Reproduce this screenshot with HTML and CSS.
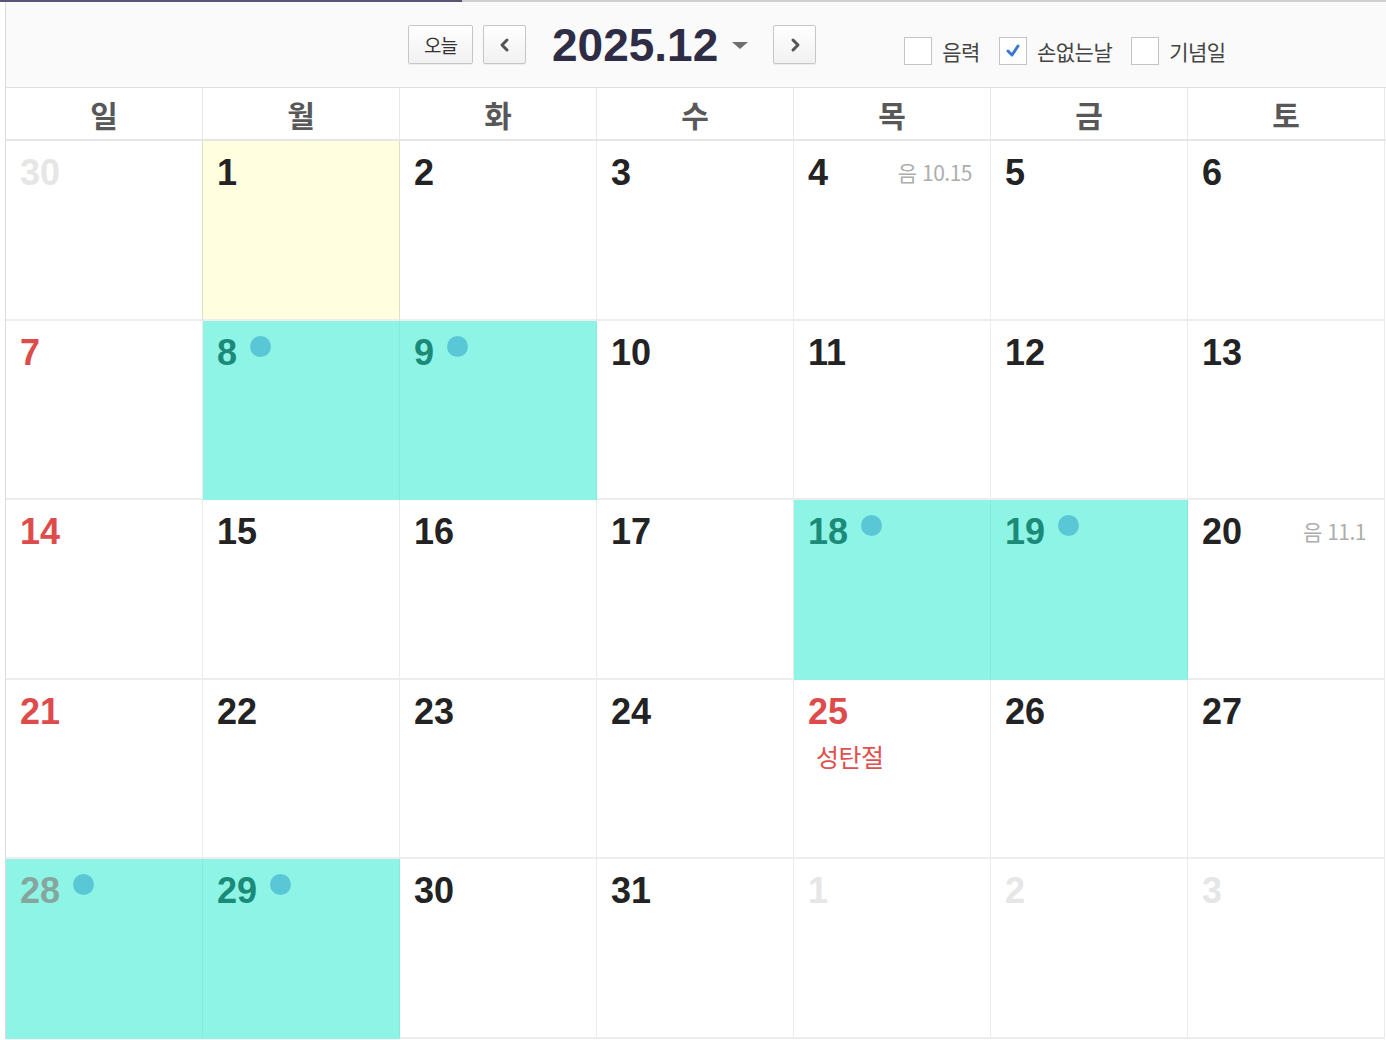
FILE: index.html
```html
<!DOCTYPE html>
<html lang="ko">
<head>
  <meta charset="UTF-8">
  <title>달력 2025.12</title>
  <link rel="stylesheet" href="styles.css">
</head>
<body>
  <div class="topline"><span class="progress"></span></div>

  <div class="calendar">
    <div class="toolbar">
      <div class="nav">
        <button class="btn today">오늘</button>
        <button class="btn arrow">
          <svg width="14" height="16" viewBox="0 0 14 16"><polyline points="9,3 4,8 9,13" fill="none" stroke="#555" stroke-width="3" stroke-linejoin="round" stroke-linecap="round"/></svg>
        </button>
        <div class="title">2025.12<span class="caret"></span></div>
        <button class="btn arrow">
          <svg width="14" height="16" viewBox="0 0 14 16"><polyline points="5,3 10,8 5,13" fill="none" stroke="#555" stroke-width="3" stroke-linejoin="round" stroke-linecap="round"/></svg>
        </button>
      </div>
      <div class="options">
        <label class="opt"><span class="box"></span>음력</label>
        <label class="opt"><span class="box">
          <svg width="20" height="20" viewBox="0 0 20 20"><polyline points="5,10 9,14 15,5" fill="none" stroke="#3b78d0" stroke-width="3" stroke-linecap="round" stroke-linejoin="round"/></svg>
        </span>손없는날</label>
        <label class="opt"><span class="box"></span>기념일</label>
      </div>
    </div>

    <div class="weekdays">
      <div>일</div><div>월</div><div>화</div><div>수</div><div>목</div><div>금</div><div>토</div>
    </div>

    <div class="grid">
      <!-- week 1 -->
      <div class="cell"><div class="top"><span class="num other">30</span></div></div>
      <div class="cell today-cell"><div class="top"><span class="num">1</span></div></div>
      <div class="cell"><div class="top"><span class="num">2</span></div></div>
      <div class="cell"><div class="top"><span class="num">3</span></div></div>
      <div class="cell"><div class="top"><span class="num">4</span><span class="lunar">음 10.15</span></div></div>
      <div class="cell"><div class="top"><span class="num">5</span></div></div>
      <div class="cell"><div class="top"><span class="num">6</span></div></div>
      <!-- week 2 -->
      <div class="cell"><div class="top"><span class="num sun">7</span></div></div>
      <div class="cell event"><div class="top"><span class="num">8</span><span class="dot"></span></div></div>
      <div class="cell event"><div class="top"><span class="num">9</span><span class="dot"></span></div></div>
      <div class="cell"><div class="top"><span class="num">10</span></div></div>
      <div class="cell"><div class="top"><span class="num">11</span></div></div>
      <div class="cell"><div class="top"><span class="num">12</span></div></div>
      <div class="cell"><div class="top"><span class="num">13</span></div></div>
      <!-- week 3 -->
      <div class="cell"><div class="top"><span class="num sun">14</span></div></div>
      <div class="cell"><div class="top"><span class="num">15</span></div></div>
      <div class="cell"><div class="top"><span class="num">16</span></div></div>
      <div class="cell"><div class="top"><span class="num">17</span></div></div>
      <div class="cell event"><div class="top"><span class="num">18</span><span class="dot"></span></div></div>
      <div class="cell event"><div class="top"><span class="num">19</span><span class="dot"></span></div></div>
      <div class="cell"><div class="top"><span class="num">20</span><span class="lunar">음 11.1</span></div></div>
      <!-- week 4 -->
      <div class="cell"><div class="top"><span class="num sun">21</span></div></div>
      <div class="cell"><div class="top"><span class="num">22</span></div></div>
      <div class="cell"><div class="top"><span class="num">23</span></div></div>
      <div class="cell"><div class="top"><span class="num">24</span></div></div>
      <div class="cell"><div class="top"><span class="num sun">25</span></div><div class="holiday">성탄절</div></div>
      <div class="cell"><div class="top"><span class="num">26</span></div></div>
      <div class="cell"><div class="top"><span class="num">27</span></div></div>
      <!-- week 5 -->
      <div class="cell event"><div class="top"><span class="num sun">28</span><span class="dot"></span></div></div>
      <div class="cell event"><div class="top"><span class="num">29</span><span class="dot"></span></div></div>
      <div class="cell"><div class="top"><span class="num">30</span></div></div>
      <div class="cell"><div class="top"><span class="num">31</span></div></div>
      <div class="cell"><div class="top"><span class="num other">1</span></div></div>
      <div class="cell"><div class="top"><span class="num other">2</span></div></div>
      <div class="cell"><div class="top"><span class="num other">3</span></div></div>
    </div>
  </div>
</body>
</html>
```

FILE: styles.css
```css
body {
  margin: 0;
  background: #fff;
  font-family: 'Noto Sans CJK KR', 'Liberation Sans', sans-serif;
  overflow: hidden;
}
.topline {
  height: 2px;
  background: #cfcfcf;
}
.progress {
  display: block;
  width: 462px;
  height: 2px;
  background: #5a5578;
}
.calendar {
  margin-left: 5px;
  width: 1381px;
  border-left: 1px solid #dcdcdc;
}
.toolbar {
  height: 85px;
  display: flex;
  align-items: center;
  padding-left: 402px;
  background: #fafafa;
  border-bottom: 1px solid #dedede;
  box-sizing: content-box;
}
.nav {
  display: flex;
  align-items: center;
}
.btn {
  height: 39px;
  margin: 0;
  padding: 0;
  border: 1px solid #c6c6c6;
  border-radius: 2px;
  background: linear-gradient(#ffffff, #f1f1f1);
  box-shadow: 0 1px 1px rgba(0, 0, 0, 0.06);
  display: flex;
  align-items: center;
  justify-content: center;
  cursor: pointer;
}
.today {
  width: 65px;
  font-family: 'Noto Sans CJK KR', sans-serif;
  font-size: 19px;
  color: #333;
  letter-spacing: -1px;
}
.arrow {
  width: 43px;
  margin-left: 10px;
}
.title {
  display: flex;
  align-items: center;
  margin: 0 25px 0 26px;
  font-family: 'Liberation Sans', Arial, sans-serif;
  font-weight: bold;
  font-size: 46px;
  color: #2e2d45;
  letter-spacing: 0;
}
.title + .arrow {
  margin-left: 0;
}
.caret {
  width: 0;
  height: 0;
  margin-left: 14px;
  margin-top: 2px;
  border-left: 8px solid transparent;
  border-right: 8px solid transparent;
  border-top: 7px solid #6f6f6f;
}
.options {
  display: flex;
  align-items: center;
  margin-left: 88px;
  margin-top: 12px;
}
.opt {
  display: flex;
  align-items: center;
  font-size: 21px;
  color: #444;
  letter-spacing: -0.5px;
  margin-right: 19px;
}
.box {
  width: 26px;
  height: 26px;
  margin-right: 10px;
  border: 1px solid #c4c4c4;
  background: #fff;
  display: flex;
  align-items: center;
  justify-content: center;
}
.weekdays {
  display: grid;
  grid-template-columns: repeat(7, 197px);
  height: 51px;
  border-bottom: 2px solid #e6e6e6;
}
.weekdays div {
  display: flex;
  align-items: center;
  justify-content: center;
  border-right: 1px solid #e8e8e8;
  font-size: 30px;
  font-weight: bold;
  color: #585858;
}
.grid {
  display: grid;
  grid-template-columns: repeat(7, 197px);
  grid-auto-rows: 179.5px;
}
.cell {
  border-right: 1px solid #ebebeb;
  border-bottom: 2px solid #ededed;
  padding: 14px 18px 0 14px;
  box-sizing: border-box;
}
.top {
  display: flex;
  align-items: flex-start;
}
.num {
  font-family: 'Liberation Sans', Arial, sans-serif;
  font-weight: bold;
  font-size: 36px;
  line-height: 36px;
  color: #232323;
}
.num.sun {
  color: #de4b4b;
}
.num.other {
  color: #e6e6e6;
}
.lunar {
  margin-left: auto;
  margin-top: 2px;
  font-size: 21px;
  color: #adadad;
  letter-spacing: -0.5px;
}
.today-cell {
  background: #ffffdf;
  border-right: 1px solid #dfdfc4;
  border-left: 1px solid #dfdfc4;
  margin-left: -1px;
}
.event {
  background: #8ef5e6;
  border-right-color: #86e9da;
  border-bottom-color: #8ef5e6;
}
.event .num {
  color: #1b8a78;
}
.event .num.sun {
  color: #86a69d;
}
.dot {
  width: 21px;
  height: 21px;
  border-radius: 50%;
  background: #5ac7d6;
  margin-left: 13px;
  margin-top: 1px;
}
.holiday {
  margin: 8px 0 0 8px;
  font-size: 25px;
  color: #e0504f;
  letter-spacing: -0.5px;
}
```
